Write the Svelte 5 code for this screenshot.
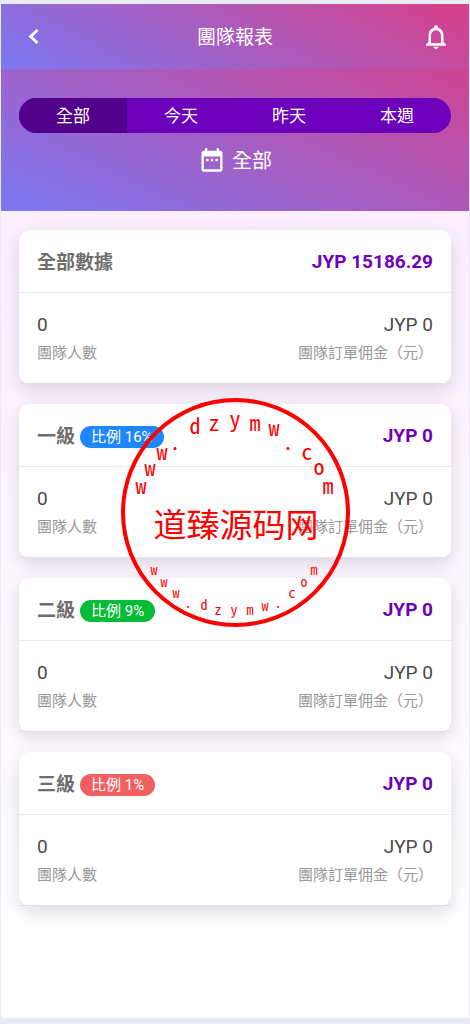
<script>
  const tabs = ['全部', '今天', '昨天', '本週'];
  let active = $state('全部');

  const cards = [
    { title: '全部數據', total: 'JYP 15186.29' },
    { title: '一級', ratio: '比例 16%', tone: 'blue', total: 'JYP 0' },
    { title: '二級', ratio: '比例 9%', tone: 'green', total: 'JYP 0' },
    { title: '三級', ratio: '比例 1%', tone: 'red', total: 'JYP 0' }
  ];
</script>

<div class="page">
  <header class="bar">
    <button class="icon-btn" aria-label="返回">
      <svg width="24" height="24" viewBox="0 0 24 24">
        <path d="M15.500 5 8.700 11.500 15.500 18" fill="none" stroke="#fff" stroke-width="3" />
      </svg>
    </button>
    <h1>團隊報表</h1>
    <button class="icon-btn" aria-label="通知">
      <svg width="30" height="30" viewBox="0 0 24 24" fill="#fff">
        <path d="M12 21.500c1.100 0 2-.7 2-1.700h-4c0 1 .9 1.700 2 1.700zm6-5.500v-5c0-3.070-1.630-5.640-4.500-6.320V4c0-.83-.67-1.500-1.500-1.500s-1.500.67-1.500 1.500v.68C7.640 5.360 6 7.920 6 11v5l-2 2v1h16v-1l-2-2zm-2 1H8v-6c0-2.480 1.510-4.500 4-4.500s4 2.020 4 4.500v6z" />
      </svg>
    </button>
  </header>

  <section class="hero">
    <div class="tabs">
      {#each tabs as tab}
        <button class:active={active === tab} onclick={() => (active = tab)}>{tab}</button>
      {/each}
    </div>
    <button class="range">
      <svg width="28" height="28" viewBox="0 0 24 24" fill="#fff">
        <path d="M19 4h-1V2h-2v2H8V2H6v2H5c-1.110 0-2 .9-2 2v14c0 1.100.89 2 2 2h14c1.100 0 2-.9 2-2V6c0-1.100-.9-2-2-2zm0 16H5V9h14v11zM7 11h2v2H7zm4 0h2v2h-2zm4 0h2v2h-2z" />
      </svg>
      <span>全部</span>
    </button>
  </section>

  <main>
    {#each cards as card}
      <article>
        <div class="head">
          <h2>{card.title}</h2>
          {#if card.ratio}<span class="badge {card.tone}">{card.ratio}</span>{/if}
          <strong>{card.total}</strong>
        </div>
        <div class="body">
          <div>
            <p class="value">0</p>
            <p class="label">團隊人數</p>
          </div>
          <div class="right">
            <p class="value">JYP 0</p>
            <p class="label">團隊訂單佣金（元）</p>
          </div>
        </div>
      </article>
    {/each}
  </main>

  <svg class="stamp" width="230" height="230" viewBox="120 397 230 230">
    <circle cx="235.500" cy="512.500" r="112.500" fill="none" stroke="#fe0000" stroke-width="4" />
    <text class="arc-top" x="141 150 162 175 195 214 235 255 274 288 307 319 328" y="494 476 460 450 434 431 427 431 436 450 460 475 494">www.dzymw.com</text>
    <text class="name" x="236" y="537">道臻源码网</text>
    <text class="arc-bottom" x="154 164 176 188 204 218 234 250 265 278 292 304 314" y="575 587 598 608 610 615 615 615 611 608 598 587 575">www.dzymw.com</text>
  </svg>
</div>

<style>
  :global(body) {
    background: #e8edf4;
  }
  .page {
    position: relative;
    box-sizing: border-box;
    min-height: calc(100vh - 10px);
    margin: 4px 1px 6px;
    padding-bottom: 112px;
    background: linear-gradient(#fbeeff 20%, #fefcff 84%, #fff);
    font-family: Roboto, 'Noto Sans CJK TC', sans-serif;
  }
  h1, h2, p {
    margin: 0;
    font-weight: 400;
  }
  button {
    padding: 0;
    border: 0;
    background: none;
    color: #fff;
    font: inherit;
    cursor: pointer;
  }
  .bar {
    display: flex;
    align-items: center;
    justify-content: space-between;
    height: 65px;
    padding: 0 18px;
    background: linear-gradient(28deg, #7b78f3, #d93f88);
    color: #fff;
  }
  .icon-btn {
    display: flex;
    width: 30px;
    justify-content: center;
  }
  h1 {
    padding-top: 2px;
    font-size: 19px;
    line-height: 28px;
  }
  .hero {
    display: flex;
    flex-direction: column;
    align-items: center;
    gap: 12px;
    padding: 29px 18px 36px;
    background: linear-gradient(25deg, #7b78f3, #cf4492);
  }
  .tabs {
    display: flex;
    align-self: stretch;
    height: 35px;
    overflow: hidden;
    border-radius: 18px;
    background: #6d00bb;
  }
  .tabs button {
    flex: 1;
    padding-bottom: 2px;
    font-size: 17px;
  }
  .tabs .active {
    background: #52008c;
  }
  .range {
    display: flex;
    align-items: center;
    gap: 6px;
    height: 30px;
    font-size: 20px;
  }
  .range span {
    padding-bottom: 2px;
  }
  main {
    display: grid;
    gap: 20px;
    padding: 19px 18px 0;
  }
  article {
    border-radius: 11px;
    background: #fff;
    box-shadow: 0 6px 18px rgba(0, 0, 0, 0.13);
  }
  .head {
    display: flex;
    align-items: center;
    gap: 5px;
    height: 62px;
    padding: 0 18px;
    border-bottom: 1px solid #e8e8eb;
  }
  h2 {
    padding-bottom: 2px;
    color: #6e6e6e;
    font-size: 19px;
    font-weight: 700;
  }
  .badge {
    margin-top: 3px;
    padding: 0 11px;
    border-radius: 11px;
    color: #fff;
    font-size: 15px;
    line-height: 22px;
  }
  .blue { background: #1e87ff; }
  .green { background: #04bc35; }
  .red { background: #f25f61; }
  strong {
    margin-left: auto;
    color: #6d00bb;
    font-size: 19px;
    font-weight: 700;
  }
  .body {
    display: flex;
    justify-content: space-between;
    padding: 17px 18px;
    border-bottom: 1px solid #e2dfe4;
  }
  .right {
    text-align: right;
  }
  .value {
    color: #4a4a4a;
    font-size: 19px;
    line-height: 30px;
  }
  .label {
    color: #999;
    font-size: 15px;
    line-height: 26px;
  }
  .stamp {
    position: absolute;
    top: 393px;
    left: 50%;
    transform: translateX(-50%);
    pointer-events: none;
  }
  .stamp text {
    fill: #fe0000;
    text-anchor: middle;
  }
  .arc-top,
  .arc-bottom {
    font-family: 'Noto Sans Mono CJK SC', 'Liberation Mono', monospace;
  }
  .arc-top { font-size: 22px; }
  .arc-bottom { font-size: 14px; }
  .name {
    font-family: 'Noto Sans CJK SC', sans-serif;
    font-size: 33px;
  }
</style>
